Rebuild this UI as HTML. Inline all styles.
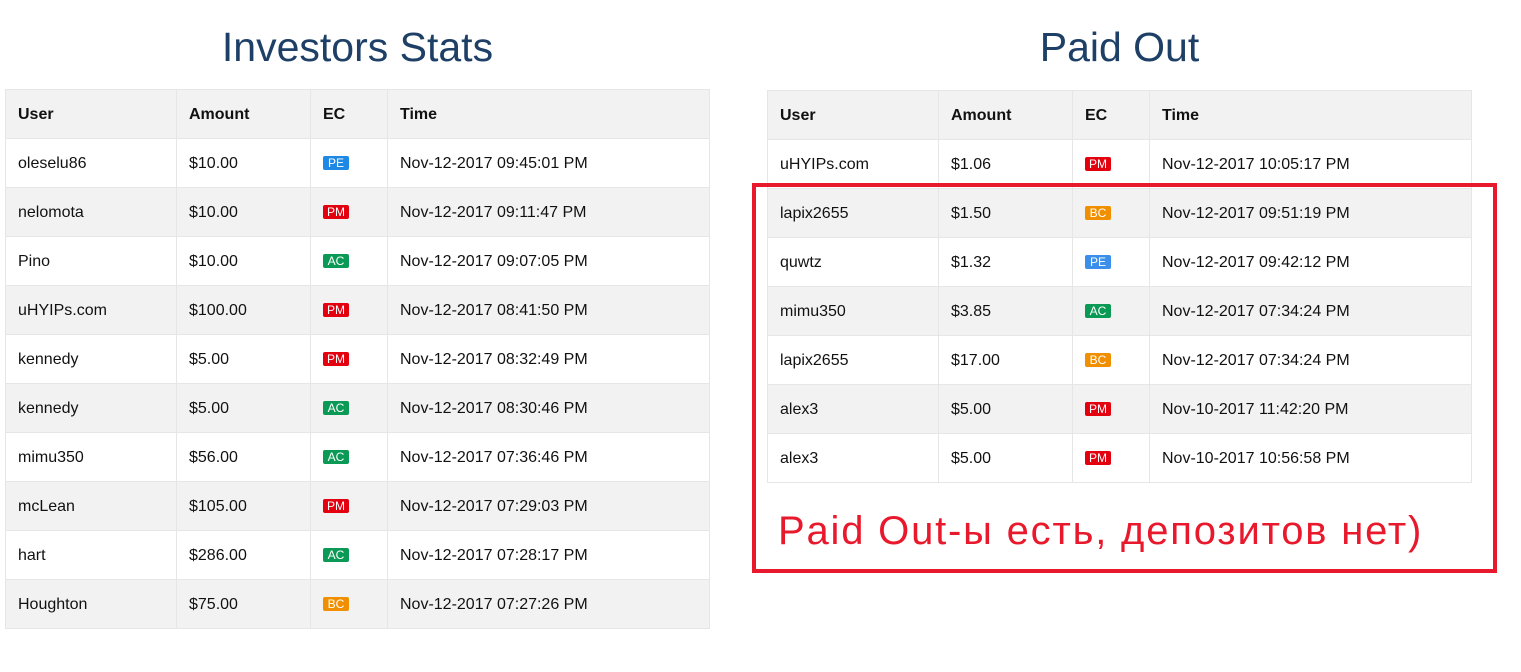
<!DOCTYPE html>
<html><head><meta charset="utf-8"><style>
body{margin:0;width:1521px;height:672px;background:#fff;position:relative;overflow:hidden;font-family:"Liberation Sans",sans-serif;color:#111}
h2{position:absolute;margin:0;font-weight:normal;font-size:41px;color:#1e3f66;text-align:center;top:20px;line-height:54px}
table{position:absolute;border-collapse:collapse;font-size:16px}
td,th{border:1px solid #e6e6e6;height:47px;padding:1px 0 0 12px;text-align:left;vertical-align:middle}
th{font-weight:bold;background:#f2f2f2}
tr:nth-child(odd) td{background:#f2f2f2}
tr:nth-child(even) td{background:#fff}
.b{display:inline-block;width:26px;height:14px;line-height:14px;font-size:12px;color:#fff;text-align:center;border-radius:2px;vertical-align:middle}
.PE{background:#1e88e5}.PM{background:#e3000f}.AC{background:#0b9a55}.BC{background:#f09000}
.box{position:absolute;left:752px;top:183px;width:737px;height:382px;border:4px solid #e8192c}
.note{position:absolute;left:778px;top:505px;font-size:40px;color:#e8192c;line-height:52px;letter-spacing:1.8px}
</style></head><body>
<h2 style="left:5px;width:705px">Investors Stats</h2>
<h2 style="left:767px;width:705px">Paid Out</h2>
<table style="left:5px;top:89px;width:705px">
<colgroup><col style="width:171px"><col style="width:134px"><col style="width:77px"><col></colgroup>
<tr><th>User</th><th>Amount</th><th>EC</th><th>Time</th></tr>
<tr><td>oleselu86</td><td>$10.00</td><td><span class="b PE">PE</span></td><td>Nov-12-2017 09:45:01 PM</td></tr>
<tr><td>nelomota</td><td>$10.00</td><td><span class="b PM">PM</span></td><td>Nov-12-2017 09:11:47 PM</td></tr>
<tr><td>Pino</td><td>$10.00</td><td><span class="b AC">AC</span></td><td>Nov-12-2017 09:07:05 PM</td></tr>
<tr><td>uHYIPs.com</td><td>$100.00</td><td><span class="b PM">PM</span></td><td>Nov-12-2017 08:41:50 PM</td></tr>
<tr><td>kennedy</td><td>$5.00</td><td><span class="b PM">PM</span></td><td>Nov-12-2017 08:32:49 PM</td></tr>
<tr><td>kennedy</td><td>$5.00</td><td><span class="b AC">AC</span></td><td>Nov-12-2017 08:30:46 PM</td></tr>
<tr><td>mimu350</td><td>$56.00</td><td><span class="b AC">AC</span></td><td>Nov-12-2017 07:36:46 PM</td></tr>
<tr><td>mcLean</td><td>$105.00</td><td><span class="b PM">PM</span></td><td>Nov-12-2017 07:29:03 PM</td></tr>
<tr><td>hart</td><td>$286.00</td><td><span class="b AC">AC</span></td><td>Nov-12-2017 07:28:17 PM</td></tr>
<tr><td>Houghton</td><td>$75.00</td><td><span class="b BC">BC</span></td><td>Nov-12-2017 07:27:26 PM</td></tr>
</table>
<table style="left:767px;top:90px;width:705px">
<colgroup><col style="width:171px"><col style="width:134px"><col style="width:77px"><col></colgroup>
<tr><th>User</th><th>Amount</th><th>EC</th><th>Time</th></tr>
<tr><td>uHYIPs.com</td><td>$1.06</td><td><span class="b PM">PM</span></td><td>Nov-12-2017 10:05:17 PM</td></tr>
<tr><td>lapix2655</td><td>$1.50</td><td><span class="b BC">BC</span></td><td>Nov-12-2017 09:51:19 PM</td></tr>
<tr><td>quwtz</td><td>$1.32</td><td><span class="b PE" style="background:#3b8eea">PE</span></td><td>Nov-12-2017 09:42:12 PM</td></tr>
<tr><td>mimu350</td><td>$3.85</td><td><span class="b AC">AC</span></td><td>Nov-12-2017 07:34:24 PM</td></tr>
<tr><td>lapix2655</td><td>$17.00</td><td><span class="b BC">BC</span></td><td>Nov-12-2017 07:34:24 PM</td></tr>
<tr><td>alex3</td><td>$5.00</td><td><span class="b PM">PM</span></td><td>Nov-10-2017 11:42:20 PM</td></tr>
<tr><td>alex3</td><td>$5.00</td><td><span class="b PM">PM</span></td><td>Nov-10-2017 10:56:58 PM</td></tr>
</table>
<div class="box"></div>
<div class="note">Paid Out-ы есть, депозитов нет)</div>
</body></html>
